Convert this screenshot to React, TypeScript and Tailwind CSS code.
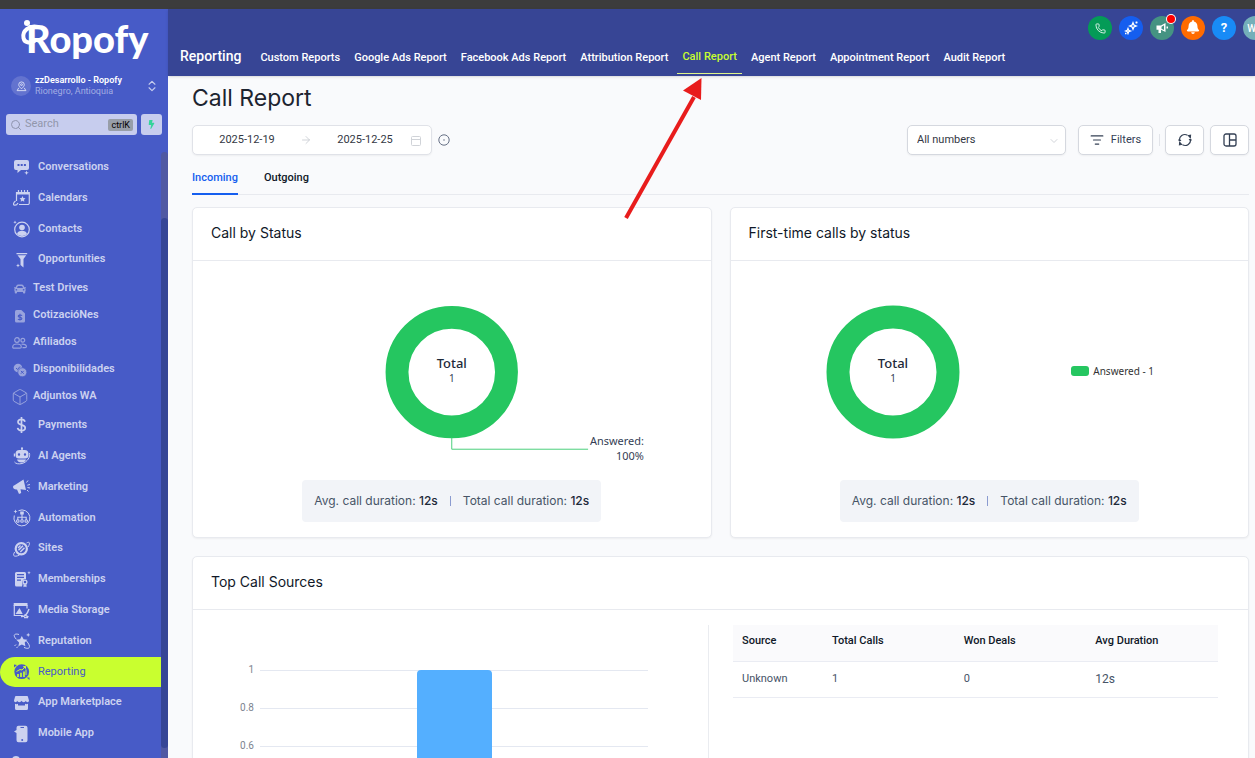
import { ReactNode } from "react";
import { ArrowRight, Box, ChevronDown, ChevronsUpDown, ListFilter, Phone, Search } from "lucide-react";
import { FaBell, FaBolt, FaCar } from "react-icons/fa";

interface NavItem {
  label: string;
  icon: ReactNode;
  active?: boolean;
}

function Glyph({ children }: { children: ReactNode }) {
  return (
    <svg viewBox="0 0 18 18" className="h-[18px] w-[18px]" fill="currentColor" aria-hidden="true">
      {children}
    </svg>
  );
}

const topItems: NavItem[] = [
  {
    label: "Conversations",
    icon: (
      <Glyph>
        <path
          fillRule="evenodd"
          d="M3 2h11a2 2 0 0 1 2 2v6a2 2 0 0 1-2 2H8l-3.500 3v-3H3a2 2 0 0 1-2-2V4a2 2 0 0 1 2-2Zm1.500 4v2h2V6h-2Zm3.200 0v2h2V6h-2Zm3.200 0v2h2V6h-2Z"
        />
        <path d="m13.500 12.500.6 1.700 1.700.6-1.700.6-.6 1.700-.6-1.700-1.700-.6 1.700-.6Z" />
      </Glyph>
    ),
  },
  {
    label: "Calendars",
    icon: (
      <Glyph>
        <path d="M3 3h13v2.500H3z" />
        <path
          d="M3.500 12V3.500h12.800V14a1.500 1.500 0 0 1-1.500 1.500H6M5.500 1v3M8.500 1v3M11.500 1v3M14.500 1v3M2.500 12c-2 1.500-2.500 3.500-1.500 4 1 .4 3-.2 4-2"
          fill="none"
          stroke="currentColor"
          strokeWidth="1.200"
        />
        <path d="m9.500 7 .9 1.900 2.100.3-1.500 1.500.3 2.100-1.800-1-1.800 1 .3-2.100-1.500-1.500 2.100-.3Z" />
      </Glyph>
    ),
  },
  {
    label: "Contacts",
    icon: (
      <Glyph>
        <circle cx="9" cy="9.500" r="7.300" fill="none" stroke="currentColor" strokeWidth="1.200" />
        <circle cx="9" cy="7.500" r="2.800" />
        <path d="M4 14c.5-2.500 2.500-3.200 5-3.200s4.500.7 5 3.200c-1.300 1.300-3 2-5 2s-3.700-.7-5-2Z" />
        <path d="m2 .5.5 1.200 1.200.5-1.200.5L2 4l-.5-1.300-1.200-.5 1.200-.5Z" />
      </Glyph>
    ),
  },
  {
    label: "Opportunities",
    icon: (
      <Glyph>
        <path d="M3.500 2h10.700v1.300H3.500zM4.500 4.300h8.700L10.500 8v8.500L7.500 14V8Z" />
        <path d="m5 12.500.6 1.400 1.400.6-1.400.6-.6 1.400-.6-1.400-1.400-.6 1.400-.6Z" />
      </Glyph>
    ),
  },
];

const customItems: NavItem[] = [
  { label: "Test Drives", icon: <FaCar size={12} /> },
  {
    label: "CotizacióNes",
    icon: (
      <svg viewBox="0 0 14 14" className="h-3.5 w-3.5" aria-hidden="true">
        <path d="M3.500 1h4.800L12 4.500V12a1.500 1.500 0 0 1-1.500 1.500h-7A1.500 1.500 0 0 1 2 12V2.500A1.500 1.500 0 0 1 3.500 1Z" fill="currentColor" />
        <path d="M9 6.700C8.500 5.800 5.200 5.800 5.200 7.200c0 1.600 3.700.8 3.700 2.400 0 1.400-3.200 1.500-3.900.4M7 4.800v6.800" fill="none" stroke="#475bc7" strokeWidth="1.100" />
      </svg>
    ),
  },
  {
    label: "Afiliados",
    icon: (
      <svg viewBox="0 0 15 14" className="h-3.5 w-[15px]" fill="none" stroke="currentColor" strokeWidth="1.200" aria-hidden="true">
        <circle cx="5" cy="4" r="2.300" />
        <circle cx="10.800" cy="4.300" r="1.900" />
        <path d="M.7 11c0-2.200 1.800-3 4.300-3s4.300.8 4.300 3c0 .9-.6 1.200-1.400 1.200H2.100C1.300 12.200.7 11.900.7 11ZM9.500 8.300c2.700-.4 4.900.4 4.900 2.300 0 .8-.5 1.100-1.200 1.100H10.500" />
      </svg>
    ),
  },
  {
    label: "Disponibilidades",
    icon: (
      <svg viewBox="0 0 14 14" className="h-3.5 w-3.5" aria-hidden="true">
        <circle cx="5" cy="5" r="4.300" fill="currentColor" />
        <circle cx="9.300" cy="9.300" r="4.500" fill="currentColor" stroke="#475bc7" strokeWidth=".7" />
        <path d="m3 5 1.500 1.500L7 3.500M7.900 7.900l2.800 2.800M10.700 7.900l-2.800 2.800" fill="none" stroke="#475bc7" strokeWidth="1" />
      </svg>
    ),
  },
  { label: "Adjuntos WA", icon: <Box size={18} strokeWidth={1.3} className="shrink-0" /> },
];

const mainItems: NavItem[] = [
  {
    label: "Payments",
    icon: (
      <Glyph>
        <path
          d="M12 5.800C11.500 3.900 10.200 3.300 8.500 3.300c-2 0-3.500 1-3.500 2.700 0 3.800 7.200 2 7.200 5.800 0 1.800-1.600 2.900-3.700 2.900-2 0-3.500-.9-3.900-2.800M8.500 1v16"
          fill="none"
          stroke="currentColor"
          strokeWidth="1.700"
        />
      </Glyph>
    ),
  },
  {
    label: "AI Agents",
    icon: (
      <Glyph>
        <path
          fillRule="evenodd"
          d="M8.300 3V1.200h1.400V3h1.800a4 4 0 0 1 4 4v1a3.500 3.500 0 0 1-3.500 3.500H6A3.500 3.500 0 0 1 2.500 8V7a4 4 0 0 1 4-4ZM6 6.300a1.200 1.200 0 1 0 0 2.400 1.200 1.200 0 0 0 0-2.400Zm6 0a1.200 1.200 0 1 0 0 2.400 1.200 1.200 0 0 0 0-2.400Z"
        />
        <circle cx="9" cy="1.300" r="1.100" />
        <path d="M.8 6.500h1.200v3H.8zM4 12.500h9c-.5 2-2 3-4.500 3S4.500 14.500 4 12.500Z" />
        <path d="M16.300 6c1.500 3.500-1.800 9-7.300 10.500-3 .8-6.500.3-7.500-1.500" fill="none" stroke="currentColor" strokeWidth="1" />
      </Glyph>
    ),
  },
  {
    label: "Marketing",
    icon: (
      <Glyph>
        <path d="M10.500 1.500 13 12l-5.500-.8.700 3.800-2.200 1-2-4.500C.5 12-1.500 8.500 1.500 7.300Z" />
        <path d="m13.500 4.500 1.500-2M14.300 7.200l2.700-.7M14.500 9.500l2.500.5M14 12l1.500 1.500" stroke="currentColor" strokeWidth="1" />
      </Glyph>
    ),
  },
  {
    label: "Automation",
    icon: (
      <Glyph>
        <path d="M5.500 1.700A8 8 0 1 1 1.300 6.500" fill="none" stroke="currentColor" strokeWidth="1" />
        <path d="M7.200 2.500h3.600v3H7.200zM2.500.5l.6 1.400 1.400.6-1.400.6-.6 1.400-.6-1.400L.5 2.500l1.400-.6Z" />
        <path d="M9 5v6M4.800 11V8.300h8.400V11" fill="none" stroke="currentColor" strokeWidth="1.100" />
        <g fill="none" stroke="currentColor" strokeWidth="1.100">
          <circle cx="4.800" cy="12" r="1.300" />
          <circle cx="9" cy="12" r="1.300" />
          <circle cx="13.200" cy="12" r="1.300" />
        </g>
      </Glyph>
    ),
  },
  {
    label: "Sites",
    icon: (
      <Glyph>
        <circle cx="8.300" cy="8.700" r="5.600" fill="none" stroke="currentColor" strokeWidth="2.200" />
        <path d="m5.500 10.200 4.500-4.500M7.300 12l4.200-4.300M5 7.900 7.500 5.500" stroke="currentColor" strokeWidth="1.400" />
        <path d="M1.700 12C-1 16 1.500 17.500 6.500 15M13.500 3c3.500-2 3.800.5 1.500 4" fill="none" stroke="currentColor" strokeWidth="1" />
      </Glyph>
    ),
  },
  {
    label: "Memberships",
    icon: (
      <Glyph>
        <path
          fillRule="evenodd"
          d="M3.500 2h8A1.500 1.500 0 0 1 13 3.500V9a3.500 3.500 0 0 0-3.500 5l-.5 2.500H3.500A1.500 1.500 0 0 1 2 15V3.500A1.500 1.500 0 0 1 3.500 2ZM4 4v1.200h7V4H4Zm0 2.800V8h7V6.800H4Zm0 2.800v1.200h4V9.600H4Z"
        />
        <circle cx="12" cy="12" r="1.900" fill="none" stroke="currentColor" strokeWidth="1.300" />
        <path d="M10.500 14.300v3l1.500-.8 1.500.8v-3M16 1l.5 1.200 1.200.5-1.200.5L16 4.400l-.5-1.200-1.200-.5 1.200-.5Z" />
      </Glyph>
    ),
  },
  {
    label: "Media Storage",
    icon: (
      <Glyph>
        <path d="M.7 2h13.800v3H.7z" />
        <path d="M1.300 4v10.500h8.500M14 4v3.500" fill="none" stroke="currentColor" strokeWidth="1.200" />
        <path d="m2.500 13 4-6 3.200 6Z" />
        <path d="M8 15.500c4 .5 6.500-3 8-7.500M11.500 13.500l4 2.500M11 16.500h4" fill="none" stroke="currentColor" strokeWidth="1.400" />
      </Glyph>
    ),
  },
  {
    label: "Reputation",
    icon: (
      <Glyph>
        <path d="m8.800 4 1.800 3.300 3.800.5-2.700 2.700.7 3.800-3.500-1.700-3.500 1.700.7-3.800-2.800-2.700 3.800-.5Z" />
        <path d="M6 2.500C3 1.500.7 2.300 1.300 4.200c.3 1 1.200 2.300 2 3M13.500 9c3 3.500 4.200 6.800 1.500 7.300-1 .2-2.500-.2-4-.9M3 12.500l-1.500 1.500M5 14.500 3.500 16" fill="none" stroke="currentColor" strokeWidth="1" />
        <path d="m15.200.8.6 1.500 1.500.6-1.500.6-.6 1.500-.6-1.500-1.500-.6 1.500-.6Z" />
      </Glyph>
    ),
  },
  {
    label: "Reporting",
    active: true,
    icon: (
      <Glyph>
        <circle cx="8.700" cy="8.700" r="7.400" />
        <path d="M1 4.500V1.500l3 .5ZM13.500 14.500h3v2.500Z" />
        <path d="M5 14v-3M8 14V9.800M11 14V8.500" stroke="#c9ff2f" strokeWidth="1.700" />
        <path d="m3.500 8.500 3.500-2 2 .5 3.500-3.500M10 3.800l2.500-.5v2.500" fill="none" stroke="#c9ff2f" strokeWidth="1" />
        <path d="M13 6.500v5.500" stroke="#c9ff2f" strokeWidth="1" />
      </Glyph>
    ),
  },
  {
    label: "App Marketplace",
    icon: (
      <Glyph>
        <path d="M3 2h11a1 1 0 0 1 1 1l1 3.500c0 2.200-2.800 2.200-3.200.3-.4 1.900-3.600 1.900-4.300 0-.6 1.900-3.800 1.900-4.300 0-.3 1.900-3.200 1.900-3.200-.3L2 3a1 1 0 0 1 1-1Z" />
        <path d="M2 9.800c1.200.5 2.200.4 3 0v1.700h7V9.800c.9.400 2 .5 3 0v4.700a1.500 1.500 0 0 1-1.500 1.500h-10A1.500 1.500 0 0 1 2 14.500Z" />
      </Glyph>
    ),
  },
  {
    label: "Mobile App",
    icon: (
      <Glyph>
        <path
          fillRule="evenodd"
          d="M5.500.8h7a2 2 0 0 1 2 2v12.400a2 2 0 0 1-2 2h-7a2 2 0 0 1-2-2V8L1 6.500 3.500 5V2.800a2 2 0 0 1 2-2ZM7.500 2v1H11V2H7.500Zm1.700 12a1 1 0 1 0 0 2 1 1 0 0 0 0-2Z"
        />
      </Glyph>
    ),
  },
];

const reportTabs = [
  "Custom Reports",
  "Google Ads Report",
  "Facebook Ads Report",
  "Attribution Report",
  "Call Report",
  "Agent Report",
  "Appointment Report",
  "Audit Report",
];

function Logo() {
  return (
    <div className="relative ml-[26px] flex h-[42px] items-center text-white">
      <span className="font-['Lato',sans-serif] text-[38px] leading-[42px] font-black">Ropofy</span>
      <svg viewBox="0 0 30 34" className="absolute top-0 -left-[7px] h-[34px] w-[30px]" aria-hidden="true">
        <circle cx="8" cy="6" r="3" fill="white" />
        <path d="M19 10C10 8 3 14 4.500 21c1 5 6 5.500 11 3" fill="none" stroke="white" strokeWidth="4" strokeLinecap="round" />
      </svg>
    </div>
  );
}

function NavLink({ item }: { item: NavItem }) {
  return (
    <a
      href="#"
      className={
        item.active
          ? "flex flex-1 items-center gap-[7px] rounded-l-full bg-[#c9ff2f] pl-[13px] text-[#475bc7]"
          : "flex flex-1 items-center gap-[7px] pl-[13px] text-[#ccd2f0]"
      }
    >
      {item.icon}
      <span className={item.active ? "" : "font-semibold"}>{item.label}</span>
    </a>
  );
}

function Sidebar() {
  return (
    <aside className="flex w-[168px] shrink-0 flex-col overflow-hidden bg-[#475bc7] pt-2">
      <Logo />
      <button className="mt-4 flex items-center gap-1 pr-[9px] pl-[11px] text-left">
        <span className="flex h-5 w-5 items-center justify-center rounded-full bg-[#6373cf] text-[#dde1f6]">
          <svg viewBox="0 0 12 12" className="h-[11px] w-[11px]" fill="none" stroke="currentColor" aria-hidden="true">
            <path d="M6 8.500C4 6.500 3 5.500 3 4a3 3 0 0 1 6 0c0 1.500-1 2.500-3 4.500ZM3 7.500 1.200 10.500h9.600L9 7.500" />
            <circle cx="6" cy="4" r="1" />
          </svg>
        </span>
        <span className="flex-1">
          <span className="block text-[9px] leading-[11px] font-semibold text-white">zzDesarrollo - Ropofy</span>
          <span className="block text-[9px] leading-[11px] text-[#a3ade3]">Rionegro, Antioquia</span>
        </span>
        <ChevronsUpDown size={14} className="text-[#c6ccee]" />
      </button>
      <div className="mt-[17px] flex gap-1 pr-[6px] pl-[6px]">
        <label className="flex h-[21px] min-w-0 flex-1 items-center gap-[3px] rounded-[3px] bg-[#c7cdee] pr-1 pl-1">
          <Search size={12} className="shrink-0 text-[#8f95ae]" />
          <input
            aria-label="Search"
            placeholder="Search"
            className="w-full min-w-0 bg-transparent text-[11px] outline-none placeholder:text-[#9297ab]"
          />
          <kbd className="rounded-xs bg-[#989ea8] px-[3px] font-['Roboto',sans-serif] text-[9px] leading-[12px] text-black">
            ctrlK
          </kbd>
        </label>
        <button aria-label="Quick actions" className="flex h-[21px] w-[21px] items-center justify-center rounded-[3px] bg-[#c7cdee]">
          <FaBolt size={9} className="text-[#33d49a]" />
        </button>
      </div>
      <div className="mt-[17px] flex min-h-0 flex-1">
        <nav className="min-w-0 flex-1 overflow-hidden text-[11px]">
          <div className="flex h-[123px] flex-col">
            {topItems.map((item) => (
              <NavLink key={item.label} item={item} />
            ))}
          </div>
          <div className="flex flex-col">
            {customItems.map((item) => (
              <a key={item.label} href="#" className="flex h-[27px] items-center gap-[6px] pl-3 text-[#ccd2f0]">
                <span className="flex w-[15px] justify-center text-[#98a3dd]">{item.icon}</span>
                <span className="font-semibold">{item.label}</span>
              </a>
            ))}
          </div>
          <div className="flex h-[339px] flex-col">
            {mainItems.map((item) => (
              <NavLink key={item.label} item={item} />
            ))}
          </div>
          <a href="#" aria-label="More" className="mt-[7px] ml-3 block h-3 w-2 rounded-sm bg-[#ccd2f0]" />
        </nav>
        <div className="w-[7px] rounded-t bg-[#5059a3] pt-[66px] pb-[10px]">
          <div className="h-full rounded bg-[#364696]" />
        </div>
      </div>
    </aside>
  );
}

function Header() {
  return (
    <header className="relative flex h-[67px] shrink-0 items-end bg-[#374595] pl-3 text-white shadow-sm">
      <h2 className="pb-[10px] text-[14px] leading-5 font-medium">Reporting</h2>
      <nav className="ml-3 flex items-end text-[11px] font-medium">
        {reportTabs.map((tab) =>
          tab === "Call Report" ? (
            <a key={tab} href="#" className="mx-[2px] mb-[2px] border-b border-[#dff58a] px-[5px] pb-2 leading-4 text-[#c9ff2f]">
              {tab}
            </a>
          ) : (
            <a key={tab} href="#" className="px-[7px] pb-[10px] leading-4">
              {tab}
            </a>
          )
        )}
      </nav>
      <div className="absolute top-[7px] -right-3 flex gap-[7px]">
        <button aria-label="Call" className="flex h-6 w-6 items-center justify-center rounded-full bg-[#049b57]">
          <Phone size={11} strokeWidth={1.8} />
        </button>
        <button aria-label="Assistant" className="flex h-6 w-6 items-center justify-center rounded-full bg-[#155eef]">
          <svg viewBox="0 0 14 14" className="h-3.5 w-3.5" fill="none" stroke="white" strokeWidth="1.300" aria-hidden="true">
            <path d="m9 1.800.9 2.300 2.300.9-2.300.9L9 8.200l-.9-2.300L5.800 5l2.300-.9ZM4 7.500l.7 1.800 1.800.7-1.800.7L4 12.500l-.7-1.800L1.500 10l1.800-.7Z" />
            <path d="M12.500.5v2M11.500 1.500h2M1 12.500h1.500" />
          </svg>
        </button>
        <button aria-label="Announcements" className="relative flex h-6 w-6 items-center justify-center rounded-full bg-[#459382]">
          <svg viewBox="0 0 14 14" className="h-3.5 w-3.5" fill="white" aria-hidden="true">
            <path fillRule="evenodd" d="M1.500 4.500H6L10.500 2v9L6 8.800V12H3.500V8.800h-2Zm5 1.200v2.100L9 9V4.300ZM11.500 5.500h1.500v2h-1.500z" />
          </svg>
          <span className="absolute -top-[1px] -right-[1px] h-2 w-2 rounded-full bg-[#f00] ring-1 ring-white" />
        </button>
        <button aria-label="Notifications" className="flex h-6 w-6 items-start justify-center rounded-full bg-[#ff6b00] pt-1">
          <FaBell size={14} />
        </button>
        <button aria-label="Help" className="flex h-6 w-6 items-center justify-center rounded-full bg-[#188bf6] text-[13px] font-bold">
          ?
        </button>
        <button aria-label="Account" className="flex h-6 w-6 items-center justify-center rounded-full bg-[#74afb9] text-[10px] font-medium">
          WG
        </button>
      </div>
    </header>
  );
}

function Toolbar() {
  const box = "flex h-[30px] items-center rounded-[5px] border border-[#d5d8df] bg-white shadow-xs";

  return (
    <div className="mt-3 flex items-center">
      <div className="flex h-[30px] w-60 items-center rounded-[5px] border border-[#e0e2e8] bg-white px-[9px] text-[#333844] shadow-xs">
        <input aria-label="Start date" defaultValue="2025-12-19" className="w-[90px] text-center text-[11px]" />
        <ArrowRight size={12} strokeWidth={1.5} className="mx-2 text-[#c2c5cc]" />
        <input aria-label="End date" defaultValue="2025-12-25" className="w-[90px] text-center text-[11px]" />
        <svg viewBox="0 0 12 12" className="mt-[2px] h-3 w-3" fill="none" stroke="#d0d3d8" aria-hidden="true">
          <path d="M2.500 1.500h7a1 1 0 0 1 1 1v7a1 1 0 0 1-1 1h-7a1 1 0 0 1-1-1v-7a1 1 0 0 1 1-1ZM1.500 4.500h9" />
        </svg>
      </div>
      <svg viewBox="0 0 12 12" className="ml-[6px] h-3 w-3" fill="none" stroke="#667085" aria-hidden="true">
        <circle cx="6" cy="6" r="5.200" />
        <path d="M6 5.200v1.600" />
      </svg>
      <div className="ml-auto flex items-center">
        <div className="relative">
          <select aria-label="Numbers" className={`${box} w-[159px] appearance-none px-[9px] text-[11px] text-[#333844]`}>
            <option>All numbers</option>
          </select>
          <ChevronDown size={12} strokeWidth={1.5} className="pointer-events-none absolute top-[10px] right-[6px] text-[#c2c5cc]" />
        </div>
        <button className={`${box} ml-3 w-[75px] justify-center gap-[7px] text-[11px] text-[#344054]`}>
          <ListFilter size={14} strokeWidth={2} />
          Filters
        </button>
        <span className="mr-[5px] ml-[6px] h-3 w-px bg-[#e2e4e9]" />
        <button aria-label="Refresh" className={`${box} w-[39px] justify-center text-[#344054]`}>
          <svg viewBox="0 0 14 14" className="h-3.5 w-3.5" fill="none" stroke="currentColor" strokeWidth="1.200" aria-hidden="true">
            <path d="M1.500 8A5.500 5.500 0 0 1 9.500 2.200M12.500 6a5.500 5.500 0 0 1-8 5.800M1.500 8l1.500-1M1.500 8 .6 6.500M12.500 6 11 7M12.500 6l.9 1.500M11 3.200l1.500 1M3 10.800 1.500 9.800" />
            <path d="M10.500 2.700 12.300 4.500 12.500 2.200ZM3.500 11.300 1.700 9.500 1.500 11.800Z" fill="currentColor" />
          </svg>
        </button>
        <button aria-label="Customize layout" className={`${box} ml-[6px] w-[39px] justify-center text-[#344054]`}>
          <svg viewBox="0 0 14 14" className="h-3.5 w-3.5" fill="none" stroke="currentColor" strokeWidth="1.300" aria-hidden="true">
            <rect x="1" y="1" width="12" height="12" rx="2" />
            <path d="M6.500 1v12M6.500 7H13" />
          </svg>
        </button>
      </div>
    </div>
  );
}

function Card({ title, children }: { title: string; children: ReactNode }) {
  return (
    <section className="min-w-0 rounded-[5px] border border-[#e8eaef] bg-white shadow-xs">
      <h3 className="border-b border-[#e8eaef] px-[18px] pt-[15px] pb-[17px] font-['Inter',sans-serif] text-[14px] leading-5 text-[#101828]">
        {title}
      </h3>
      {children}
    </section>
  );
}

function Donut() {
  return (
    <>
      <circle cx="67" cy="67" r="55" fill="none" stroke="#25c660" strokeWidth="23" />
      <text x="67" y="63" textAnchor="middle" fontSize="13" fontWeight="500" fill="#1d2939">
        Total
      </text>
      <text x="67" y="77" textAnchor="middle" fontSize="10" fill="#344054">
        1
      </text>
    </>
  );
}

function Durations() {
  return (
    <p className="mx-auto flex h-[42px] w-fit items-center rounded bg-[#f2f4f8] px-3 font-['Inter',sans-serif] text-[12px] text-[#475467]">
      <span>
        Avg. call duration: <b className="font-medium text-[#1d2939]">12s</b>
      </span>
      <span className="mx-3 h-[10px] w-px bg-[#8b9bd0]" />
      <span>
        Total call duration: <b className="font-medium text-[#1d2939]">12s</b>
      </span>
    </p>
  );
}

function SourcesChart() {
  const ticks = ["1", "0.8", "0.6", "0.4", "0.2", "0"];

  return (
    <div className="relative mt-[54px] pr-[60px] pl-[41px]">
      {ticks.map((tick) => (
        <div key={tick} className="flex h-[38px] items-start">
          <span className="w-5 text-right text-[10px] leading-3 text-[#7d8490]">{tick}</span>
          <span className="mt-[6px] ml-[6px] h-px flex-1 bg-[#e4e8f1]" />
        </div>
      ))}
      <div className="absolute top-[6px] right-[60px] left-[67px] flex h-[190px] justify-center">
        <div className="w-[75px] rounded-t bg-[#54afff]" />
      </div>
    </div>
  );
}

function SourcesTable() {
  return (
    <table className="w-full table-fixed text-left text-[11px]">
      <thead>
        <tr className="h-9 border-b border-[#eaecf3] bg-[#fafafc] text-[#101828]">
          <th className="w-[90px] px-[9px] pb-[3px] font-medium">Source</th>
          <th className="px-[9px] pb-[3px] font-medium">Total Calls</th>
          <th className="px-[9px] pb-[3px] font-medium">Won Deals</th>
          <th className="px-[9px] pb-[3px] font-medium">Avg Duration</th>
        </tr>
      </thead>
      <tbody>
        <tr className="h-9 border-b border-[#eaecf3] text-[#475467]">
          <td className="px-[9px]">Unknown</td>
          <td className="px-[9px]">1</td>
          <td className="px-[9px]">0</td>
          <td className="px-[9px] text-[12px]">12s</td>
        </tr>
      </tbody>
    </table>
  );
}

export default function App() {
  return (
    <div className="flex h-screen flex-col overflow-hidden bg-[#3c3c3c] pt-[9px] font-['Roboto',sans-serif]">
      <div className="flex min-h-0 flex-1">
        <Sidebar />
        <div className="flex min-w-0 flex-1 flex-col bg-[#f9fafc]">
          <Header />
          <main className="min-h-0 flex-1 overflow-hidden pt-2 pr-[6px] pl-6">
            <h1 className="font-['Inter',sans-serif] text-[23px] leading-[29px] text-[#1d2430]">Call Report</h1>
            <Toolbar />
            <div className="mt-3 flex gap-[26px] border-b border-[#e8eaef] text-[11px] font-medium">
              <button className="-mb-px h-7 border-b-2 border-[#155eef] pt-[3px] pb-[7px] leading-4 text-[#155eef]">Incoming</button>
              <button className="h-[27px] pt-[3px] pb-2 leading-4 text-[#101828]">Outgoing</button>
            </div>

            <div className="mt-3 grid grid-cols-2 gap-[18px]">
              <Card title="Call by Status">
                <div className="flex justify-center pt-11">
                  <svg
                    viewBox="-193 0 520 175"
                    className="h-[175px] w-[520px] max-w-full font-['Noto_Sans',sans-serif]"
                    role="img"
                    aria-label="Call by status"
                  >
                    <Donut />
                    <path d="M67 133v11.500h137" fill="none" stroke="#4bcf7c" />
                    <text x="260" y="140" textAnchor="end" fontSize="11" fill="#344054">
                      Answered:
                    </text>
                    <text x="260" y="155" textAnchor="end" fontSize="11" fill="#344054">
                      100%
                    </text>
                  </svg>
                </div>
                <div className="pb-[15px]">
                  <Durations />
                </div>
              </Card>

              <Card title="First-time calls by status">
                <div className="flex h-[219px] items-start pt-11 pl-[95px]">
                  <svg viewBox="0 0 134 134" className="h-[134px] w-[134px] font-['Noto_Sans',sans-serif]" role="img" aria-label="First-time calls by status">
                    <Donut />
                  </svg>
                  <div className="mt-[58px] mr-[94px] ml-auto flex items-center gap-1 font-['Noto_Sans',sans-serif] text-[10px] leading-4 text-[#333333]">
                    <span className="h-[10px] w-[18px] rounded-[3px] bg-[#25c660]" />
                    Answered - 1
                  </div>
                </div>
                <div className="pb-[15px]">
                  <Durations />
                </div>
              </Card>
            </div>

            <div className="mt-[18px]">
              <Card title="Top Call Sources">
                <div className="flex">
                  <div className="w-[515px] shrink-0">
                    <SourcesChart />
                  </div>
                  <div className="mt-[15px] w-px bg-[#eaecf0]" />
                  <div className="min-w-0 flex-1 pt-[15px] pr-[30px] pl-6">
                    <SourcesTable />
                  </div>
                </div>
              </Card>
            </div>
          </main>
        </div>
      </div>

      {/* Callout arrow pointing at the Call Report tab */}
      <svg viewBox="0 0 80 142" className="pointer-events-none absolute top-[77px] left-[624px] h-[142px] w-20" aria-hidden="true">
        <path d="M2 141 70 20" stroke="#e81c1c" strokeWidth="4" />
        <path d="M77.500 1 59 13.500 77 23Z" fill="#e81c1c" />
      </svg>
    </div>
  );
}
